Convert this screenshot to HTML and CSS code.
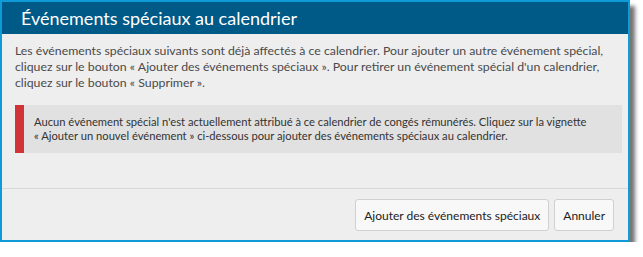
FILE: index.html
```html
<!DOCTYPE html>
<html lang="fr">
<head>
    <meta charset="UTF-8">
    <meta name="viewport" content="width=device-width, initial-scale=1.0">
    <title>Événements spéciaux au calendrier</title>
    <link rel="stylesheet" href="styles.css">
</head>
<body>
    <div class="dialog">
        <div class="dialog-header">
            <h1>Événements spéciaux au calendrier</h1>
        </div>

        <div class="dialog-body">
            <p class="intro">Les événements spéciaux suivants sont déjà affectés à ce calendrier. Pour ajouter un autre événement spécial, cliquez sur le bouton «&nbsp;Ajouter des événements spéciaux&nbsp;». Pour retirer un événement spécial d'un calendrier, cliquez sur le bouton «&nbsp;Supprimer&nbsp;».</p>

            <div class="alert">
                <p>Aucun événement spécial n'est actuellement attribué à ce calendrier de congés rémunérés. Cliquez sur la vignette «&nbsp;Ajouter un nouvel événement&nbsp;» ci-dessous pour ajouter des événements spéciaux au calendrier.</p>
            </div>
        </div>

        <div class="dialog-footer">
            <button class="btn">Ajouter des événements spéciaux</button>
            <button class="btn">Annuler</button>
        </div>
    </div>
</body>
</html>
```

FILE: styles.css
```css
* {
    margin: 0;
    padding: 0;
    box-sizing: border-box;
    font-family: 'Segoe UI', Lato, sans-serif;
}

body {
    background: white;
}

.dialog {
    width: 630px;
    background: #eeeeee;
    border: 2px solid #0f9bd7;
    box-shadow: 5px 6px 4px rgba(0, 0, 0, 0.55);
}

.dialog-header {
    background: #005a87;
    height: 32px;
    padding: 0 19px;
    display: flex;
    align-items: center;
}

.dialog-header h1 {
    color: white;
    font-size: 18px;
    font-weight: 400;
}

.dialog-body {
    padding: 9px 6px 35px 13px;
}

.intro {
    font-size: 12.3px;
    line-height: 16px;
    color: #4a4a4a;
    margin-bottom: 14px;
    padding-right: 14px;
}

.alert {
    background: #e1e1e1;
    border-left: 9px solid #d13438;
    padding: 10px 10px;
}

.alert p {
    font-size: 11.2px;
    line-height: 14px;
    color: #333333;
}

.dialog-footer {
    border-top: 1px solid #d8d8d8;
    padding: 10px 14px 9px;
    display: flex;
    justify-content: flex-end;
    gap: 5px;
}

.btn {
    height: 32px;
    padding: 0 8px;
    background: #f8f8f8;
    border: 1px solid #d0d0d0;
    border-radius: 3px;
    font-size: 12px;
    color: #222222;
    cursor: pointer;
}
```
